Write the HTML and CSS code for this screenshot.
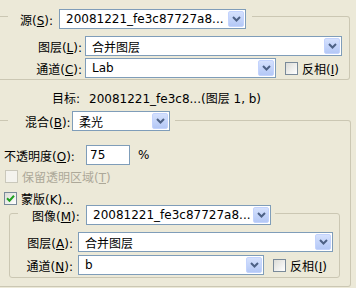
FILE: index.html
```html
<!DOCTYPE html>
<html lang="zh">
<head>
<meta charset="utf-8">
<link rel="stylesheet" href="styles.css">
</head>
<body>
<div class="dialog">
  <div class="group g1">
    <div class="head h1">
      <span class="lbl l-src">源(<u>S</u>):</span>
      <div class="combo w-src"><span class="val">20081221_fe3c87727a8...</span><span class="btn"><svg width="9" height="6" viewBox="0 0 9 6"><path d="M1 1 L4.5 4.5 L8 1" stroke="#4d6185" stroke-width="2" fill="none"/></svg></span></div>
    </div>
    <div class="row r-layer">
      <span class="lbl l-col1">图层(<u>L</u>):</span>
      <div class="combo w-layer"><span class="val">合并图层</span><span class="btn"><svg width="9" height="6" viewBox="0 0 9 6"><path d="M1 1 L4.5 4.5 L8 1" stroke="#4d6185" stroke-width="2" fill="none"/></svg></span></div>
    </div>
    <div class="row r-chan">
      <span class="lbl l-col1">通道(<u>C</u>):</span>
      <div class="combo w-chan"><span class="val">Lab</span><span class="btn"><svg width="9" height="6" viewBox="0 0 9 6"><path d="M1 1 L4.5 4.5 L8 1" stroke="#4d6185" stroke-width="2" fill="none"/></svg></span></div>
      <span class="chk chk-inv1"></span><span class="chk-text">反相(<u>I</u>)</span>
    </div>
  </div>

  <div class="target"><span class="t-lbl">目标:</span><span>20081221_fe3c8...(图层 1, b)</span></div>

  <div class="group g2">
    <div class="head h2">
      <span class="lbl l-blend">混合(<u>B</u>):</span>
      <div class="combo w-blend"><span class="val">柔光</span><span class="btn"><svg width="9" height="6" viewBox="0 0 9 6"><path d="M1 1 L4.5 4.5 L8 1" stroke="#4d6185" stroke-width="2" fill="none"/></svg></span></div>
    </div>
    <div class="row r-opacity">
      <span class="lbl l-opacity">不透明度(<u>O</u>):</span>
      <div class="input"><span class="val">75</span></div>
      <span class="pct">%</span>
    </div>
    <div class="row r-keep disabled">
      <span class="chk chk-dis"></span><span class="chk-text">保留透明区域(<u>T</u>)</span>
    </div>
    <div class="row r-mask">
      <span class="chk checked"><svg width="9" height="9" viewBox="0 0 9 9"><path d="M1 4.2 L3.5 6.7 L8 1.8" stroke="#21a121" stroke-width="2" fill="none"/></svg></span><span class="chk-text">蒙版(<u>K</u>)...</span>
    </div>
    <div class="group g3">
      <div class="head h3">
        <span class="lbl l-img">图像(<u>M</u>):</span>
        <div class="combo w-img"><span class="val">20081221_fe3c87727a8...</span><span class="btn"><svg width="9" height="6" viewBox="0 0 9 6"><path d="M1 1 L4.5 4.5 L8 1" stroke="#4d6185" stroke-width="2" fill="none"/></svg></span></div>
      </div>
      <div class="row r-layer2">
        <span class="lbl l-col2">图层(<u>A</u>):</span>
        <div class="combo w-layer2"><span class="val">合并图层</span><span class="btn"><svg width="9" height="6" viewBox="0 0 9 6"><path d="M1 1 L4.5 4.5 L8 1" stroke="#4d6185" stroke-width="2" fill="none"/></svg></span></div>
      </div>
      <div class="row r-chan2">
        <span class="lbl l-col2">通道(<u>N</u>):</span>
        <div class="combo w-chan2"><span class="val">b</span><span class="btn"><svg width="9" height="6" viewBox="0 0 9 6"><path d="M1 1 L4.5 4.5 L8 1" stroke="#4d6185" stroke-width="2" fill="none"/></svg></span></div>
        <span class="chk chk-inv2"></span><span class="chk-text">反相(<u>I</u>)</span>
      </div>
    </div>
  </div>
</div>
</body>
</html>
```
FILE: styles.css
```css
html, body {
  margin: 0;
  padding: 0;
  background: #ece9d8;
}
body {
  width: 356px;
  height: 288px;
  overflow: hidden;
  font-family: "DejaVu Sans", "Noto Sans CJK SC", sans-serif;
  font-size: 12px;
  color: #000;
}
u { text-decoration: underline; text-underline-offset: 1px; }

.dialog { display: flex; flex-direction: column; }

.group {
  border: 1px solid #cbc7b3;
  border-radius: 3px;
  display: flex;
  flex-direction: column;
}
.g1 {
  margin: 16px 6px 0 0;
  border-left: none;
  border-radius: 0 3px 3px 0;
  padding-bottom: 1px;
}
.g2 {
  margin: 14px 5px 0 0;
  border-left: none;
  border-radius: 0 3px 3px 0;
  padding-bottom: 8px;
}
.g3 {
  margin: 8px 10px 0 9px;
  padding-bottom: 2px;
}

.head {
  display: flex;
  align-items: center;
  align-self: flex-start;
  background: #ece9d8;
  height: 20px;
}
.h1 { margin: -8px 0 0 8px; padding: 0 6px 0 12px; }
.h2 { margin: -10px 0 0 8px; padding: 0 5px 0 17px; }
.h3 { margin: -9px 0 0 8px; padding: 0 4px 0 14px; }

.row {
  display: flex;
  align-items: center;
  height: 20px;
}
.lbl { white-space: nowrap; }
.l-src { width: 39px; }
.l-blend { width: 47px; }
.l-img { width: 54px; }
.l-col1 { width: 82px; text-align: right; margin-right: 3px; }
.l-col2 { width: 63px; text-align: right; margin-right: 5px; }
.l-opacity { width: 82px; padding-left: 4px; }

.r-layer { margin-top: 7px; }
.r-chan { margin-top: 2px; }
.r-layer2 { margin-top: 7px; }
.r-chan2 { margin-top: 3px; }

.combo {
  box-sizing: border-box;
  height: 20px;
  border: 1px solid #7f9db9;
  background: #fff;
  display: flex;
  align-items: center;
  padding: 1px;
}
.combo .val {
  flex: 1;
  padding-left: 5px;
  white-space: nowrap;
  overflow: hidden;
}
.combo .btn {
  width: 16px;
  height: 16px;
  box-sizing: border-box;
  border: 1px solid #c3d3fd;
  border-radius: 2px;
  background: linear-gradient(#d5e1fd, #b4c8f6);
  display: flex;
  align-items: center;
  justify-content: center;
}
.w-src { width: 187px; }
.w-layer { width: 257px; }
.w-chan { width: 191px; }
.w-blend { width: 98px; }
.w-img { width: 185px; }
.w-layer2 { width: 255px; }
.w-chan2 { width: 186px; }

.chk {
  box-sizing: border-box;
  width: 13px;
  height: 13px;
  border: 1px solid #7a8a99;
  background: linear-gradient(135deg, #dcdcd7, #fff);
  display: inline-flex;
  align-items: center;
  justify-content: center;
  flex: none;
}
.chk-inv1 { margin-left: 9px; }
.chk-inv2 { margin-left: 9px; }
.chk-text { margin-left: 4px; white-space: nowrap; }

.target {
  margin: 12px 0 0 52px;
  height: 14px;
  line-height: 14px;
  display: flex;
  white-space: nowrap;
}
.t-lbl { width: 37px; }

.r-opacity { margin-top: 14px; }
.input {
  box-sizing: border-box;
  width: 44px;
  height: 20px;
  border: 1px solid #7f9db9;
  background: #fff;
  display: flex;
  align-items: center;
  padding-left: 3px;
}
.pct { margin-left: 8px; }

.r-keep { margin-top: 5px; height: 13px; padding-left: 5px; }
.disabled { color: #aca899; }
.chk-dis { border-color: #cac8bb; background: #f4f3ee; }
.r-mask { margin-top: 9px; height: 13px; padding-left: 4px; }
```
